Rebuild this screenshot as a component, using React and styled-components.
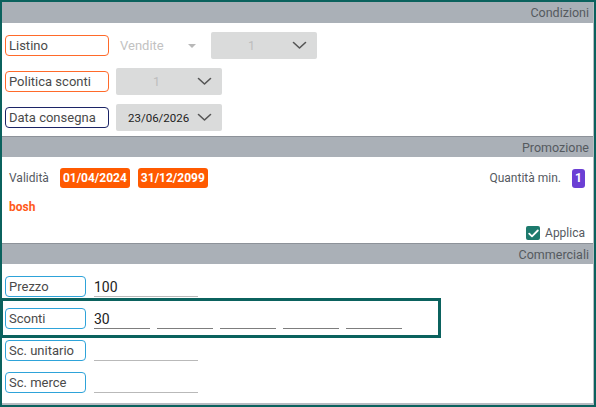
import React from 'react';
import styled, { createGlobalStyle } from 'styled-components';

const GlobalStyle = createGlobalStyle`
  html, body {
    margin: 0;
    padding: 0;
    background: #ffffff;
  }
  * {
    box-sizing: border-box;
  }
`;

const Frame = styled.div`
  width: 596px;
  height: 407px;
  border: 2px solid #0b625e;
  background: #ffffff;
  font-family: Roboto, 'Noto Sans', sans-serif;
  overflow: hidden;
`;

const Panel = styled.div`
  height: 100%;
  display: flex;
  flex-direction: column;
  border-right: 1px solid #b8bcc2;
  border-bottom: 2px solid #b8bcc2;
`;

const SectionHeader = styled.div`
  height: ${props => props.h || 21}px;
  background: #aab0b7;
  border-top: ${props => (props.first ? 'none' : '1px solid #8d9299')};
  display: flex;
  align-items: center;
  justify-content: flex-end;
  padding: 0 4px 0 0;
  font-size: 12.5px;
  color: #555a5f;
`;

const SectionBody = styled.div`
  position: relative;
  height: ${props => props.h}px;
  padding: ${props => props.pad || '0'};
  display: flex;
  flex-direction: column;
  gap: ${props => props.gap || 0}px;
`;

const Row = styled.div`
  display: flex;
  align-items: center;
  height: ${props => props.h || 27}px;
`;

const LabelBox = styled.div`
  width: ${props => props.w}px;
  height: 21px;
  margin-left: 3px;
  border: 1.75px solid ${props => props.color};
  border-radius: 4px;
  display: flex;
  align-items: center;
  padding-left: 3px;
  font-size: 13px;
  color: #4a4a4a;
  flex-shrink: 0;
`;

const PlainSelect = styled.div`
  display: flex;
  align-items: center;
  margin-left: 11px;
  width: 84px;
  font-size: 13px;
  color: #c2c2c2;
`;

const Caret = styled.span`
  margin-left: auto;
  margin-right: 8px;
  width: 0;
  height: 0;
  border-left: 4px solid transparent;
  border-right: 4px solid transparent;
  border-top: 4px solid #b8b8b8;
`;

const SelectBox = styled.div`
  width: 106px;
  height: 27px;
  margin-left: ${props => props.ml}px;
  background: #dadbdb;
  border-radius: 2px;
  display: flex;
  align-items: center;
  padding: 0 10px 0 ${props => (props.center ? 0 : 12)}px;
  font-size: ${props => (props.center ? 12.5 : 11.5)}px;
  color: ${props => (props.muted ? '#bdbdbd' : '#222222')};
`;

const SelectValue = styled.span`
  flex: 1;
  text-align: ${props => (props.center ? 'center' : 'left')};
`;

const Chevron = () => (
  <svg width="15" height="9" viewBox="0 0 15 9" fill="none">
    <path d="M1.5 1.5 L7.5 7 L13.5 1.5" stroke="#555" strokeWidth="1.6" strokeLinecap="round" strokeLinejoin="round" />
  </svg>
);

const PromoRow = styled.div`
  display: flex;
  align-items: center;
  padding: 0 8px 0 7px;
  height: ${props => props.h}px;
  margin-top: ${props => props.mt || 0}px;
`;

const MutedText = styled.span`
  font-size: 12px;
  color: #555a5f;
`;

const DateBadge = styled.span`
  background: #ff5a00;
  color: #ffffff;
  font-weight: 700;
  font-size: 12px;
  border-radius: 3px;
  height: 20px;
  padding: 0 3px;
  display: inline-flex;
  align-items: center;
  margin-left: ${props => props.ml}px;
`;

const CountBadge = styled.span`
  background: #6b3fd4;
  color: #ffffff;
  font-weight: 700;
  font-size: 12px;
  border-radius: 3px;
  width: 13px;
  height: 19px;
  display: inline-flex;
  align-items: center;
  justify-content: center;
  margin-left: 11px;
`;

const Spacer = styled.span`
  flex: 1;
`;

const PromoName = styled.span`
  font-size: 12px;
  font-weight: 700;
  color: #ff5a1a;
`;

const CheckBox = styled.span`
  width: 14px;
  height: 14px;
  border-radius: 2px;
  background: #1d7a6d;
  display: inline-flex;
  align-items: center;
  justify-content: center;
  margin-right: 5px;
`;

const ApplyText = styled.span`
  font-size: 12px;
  color: #555a5f;
`;

const FieldRow = styled.div`
  display: flex;
  align-items: center;
  height: 21px;
`;

const Inputs = styled.div`
  display: flex;
  gap: 7px;
  margin-left: 8px;
`;

const Input = styled.div`
  width: ${props => props.w}px;
  height: 21px;
  border-bottom: 1px solid ${props => (props.dark ? '#7d7d7d' : '#b9b9b9')};
  font-size: 14px;
  color: #222;
  display: flex;
  align-items: center;
  padding-top: 2px;
`;

const Highlight = styled.div`
  position: absolute;
  left: -2px;
  top: 34px;
  width: 441px;
  height: 40px;
  border: 3px solid #0b625e;
  pointer-events: none;
`;

const discounts = ['30', '', '', '', ''];

const App = () => (
  <>
    <GlobalStyle />
    <Frame>
      <Panel>
        <SectionHeader first>Condizioni</SectionHeader>
        <SectionBody h={113} pad="9px 0 0 0" gap={9}>
          <Row>
            <LabelBox w={104} color="#ff6a2a">Listino</LabelBox>
            <PlainSelect>
              Vendite
              <Caret />
            </PlainSelect>
            <SelectBox ml={7} muted center>
              <SelectValue center>1</SelectValue>
              <Chevron />
            </SelectBox>
          </Row>
          <Row>
            <LabelBox w={104} color="#ff6a2a">Politica sconti</LabelBox>
            <SelectBox ml={7} muted center>
              <SelectValue center>1</SelectValue>
              <Chevron />
            </SelectBox>
          </Row>
          <Row>
            <LabelBox w={104} color="#1c2466">Data consegna</LabelBox>
            <SelectBox ml={7}>
              <SelectValue>23/06/2026</SelectValue>
              <Chevron />
            </SelectBox>
          </Row>
        </SectionBody>

        <SectionHeader>Promozione</SectionHeader>
        <SectionBody h={86} pad="11px 0 0 0">
          <PromoRow h={20}>
            <MutedText>Validità</MutedText>
            <DateBadge ml={11}>01/04/2024</DateBadge>
            <DateBadge ml={8}>31/12/2099</DateBadge>
            <Spacer />
            <MutedText>Quantità min.</MutedText>
            <CountBadge>1</CountBadge>
          </PromoRow>
          <PromoRow h={20} mt={9}>
            <PromoName>bosh</PromoName>
          </PromoRow>
          <PromoRow h={16} mt={8}>
            <Spacer />
            <CheckBox>
              <svg width="11" height="9" viewBox="0 0 11 9" fill="none">
                <path d="M1.2 4.6 L4 7.3 L9.8 1.5" stroke="#fff" strokeWidth="1.8" strokeLinecap="round" strokeLinejoin="round" />
              </svg>
            </CheckBox>
            <ApplyText>Applica</ApplyText>
          </PromoRow>
        </SectionBody>

        <SectionHeader>Commerciali</SectionHeader>
        <SectionBody h={139} pad="12px 0 0 0" gap={11}>
          <FieldRow>
            <LabelBox w={81} color="#2ea3d9">Prezzo</LabelBox>
            <Inputs>
              <Input w={104}>100</Input>
            </Inputs>
          </FieldRow>
          <FieldRow>
            <LabelBox w={81} color="#2ea3d9">Sconti</LabelBox>
            <Inputs>
              {discounts.map((v, i) => (
                <Input key={i} w={56} dark>{v}</Input>
              ))}
            </Inputs>
          </FieldRow>
          <FieldRow>
            <LabelBox w={81} color="#2ea3d9">Sc. unitario</LabelBox>
            <Inputs>
              <Input w={104} />
            </Inputs>
          </FieldRow>
          <FieldRow>
            <LabelBox w={81} color="#2ea3d9">Sc. merce</LabelBox>
            <Inputs>
              <Input w={104} />
            </Inputs>
          </FieldRow>
          <Highlight />
        </SectionBody>
      </Panel>
    </Frame>
  </>
);

export default App;
